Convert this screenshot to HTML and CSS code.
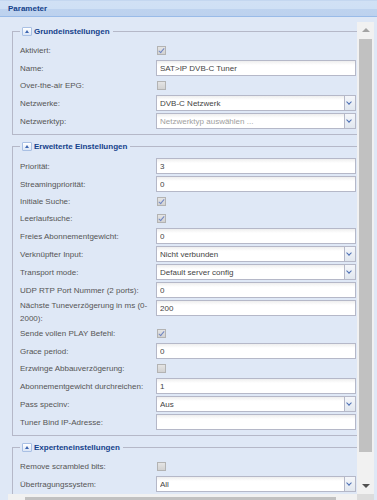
FILE: index.html
```html
<!DOCTYPE html>
<html lang="de">
<head>
  <meta charset="UTF-8" />
  <title>Parameter</title>
  <link rel="stylesheet" href="styles.css">
</head>
<body>
<div class="panel">
  <div class="panel-header">Parameter</div>
  <div class="panel-body">
    <div class="scroller">
      <div class="scroll-view">
        <form class="form">

          <fieldset>
            <legend><span class="tool"></span>Grundeinstellungen</legend>
            <div class="row check"><label>Aktiviert:</label><span class="cb on"></span></div>
            <div class="row"><label>Name:</label><input class="field" type="text" value="SAT>IP DVB-C Tuner"></div>
            <div class="row check"><label>Over-the-air EPG:</label><span class="cb"></span></div>
            <div class="row"><label>Netzwerke:</label><div class="combo"><input class="field" type="text" value="DVB-C Netzwerk"><span class="trigger"></span></div></div>
            <div class="row"><label>Netzwerktyp:</label><div class="combo"><input class="field" type="text" placeholder="Netzwerktyp auswählen ..."><span class="trigger"></span></div></div>
          </fieldset>

          <fieldset>
            <legend><span class="tool"></span>Erweiterte Einstellungen</legend>
            <div class="row"><label>Priorität:</label><input class="field" type="text" value="3"></div>
            <div class="row"><label>Streamingpriorität:</label><input class="field" type="text" value="0"></div>
            <div class="row check"><label>Initiale Suche:</label><span class="cb on"></span></div>
            <div class="row check"><label>Leerlaufsuche:</label><span class="cb on"></span></div>
            <div class="row"><label>Freies Abonnementgewicht:</label><input class="field" type="text" value="0"></div>
            <div class="row"><label>Verknüpfter Input:</label><div class="combo"><input class="field" type="text" value="Nicht verbunden"><span class="trigger"></span></div></div>
            <div class="row"><label>Transport mode:</label><div class="combo"><input class="field" type="text" value="Default server config"><span class="trigger"></span></div></div>
            <div class="row"><label>UDP RTP Port Nummer (2 ports):</label><input class="field" type="text" value="0"></div>
            <div class="row tall"><label>Nächste Tuneverzögerung in ms (0-2000):</label><input class="field" type="text" value="200"></div>
            <div class="row check"><label>Sende vollen PLAY Befehl:</label><span class="cb on"></span></div>
            <div class="row"><label>Grace period:</label><input class="field" type="text" value="0"></div>
            <div class="row check"><label>Erzwinge Abbauverzögerung:</label><span class="cb"></span></div>
            <div class="row"><label>Abonnementgewicht durchreichen:</label><input class="field" type="text" value="1"></div>
            <div class="row"><label>Pass specinv:</label><div class="combo"><input class="field" type="text" value="Aus"><span class="trigger"></span></div></div>
            <div class="row"><label>Tuner Bind IP-Adresse:</label><input class="field" type="text" value=""></div>
          </fieldset>

          <fieldset>
            <legend><span class="tool"></span>Experteneinstellungen</legend>
            <div class="row check"><label>Remove scrambled bits:</label><span class="cb"></span></div>
            <div class="row"><label>Übertragungssystem:</label><div class="combo"><input class="field" type="text" value="All"><span class="trigger"></span></div></div>
          </fieldset>

        </form>
      </div>
      <div class="vbar">
        <div class="sb-btn up"></div>
        <div class="sb-thumb"></div>
        <div class="sb-space"></div>
        <div class="sb-btn down"></div>
      </div>
    </div>
    <div class="hbar">
      <div class="sb-btn left"></div>
      <div class="sb-thumb-h"></div>
      <div class="sb-space"></div>
      <div class="sb-btn right"></div>
      <div class="sb-corner"></div>
    </div>
  </div>
</div>
</body>
</html>
```

FILE: styles.css
```css
* {
  margin: 0;
  padding: 0;
  box-sizing: border-box;
}

html, body {
  width: 377px;
  height: 500px;
  overflow: hidden;
}

body {
  font-family: 'Liberation Sans', Arial, sans-serif;
  font-size: 8px;
  color: #333;
  background: #dfe8f6;
}

.panel {
  height: 500px;
  display: flex;
  flex-direction: column;
}

.panel-header {
  height: 17px;
  padding: 0 0 0 8px;
  border-top: 1px solid #c4d7f0;
  border-bottom: 1px solid #99bbe8;
  background: linear-gradient(#d1e1f5 0, #cfe0f5 50%, #bed3ef 55%, #bcd1ee 100%);
  color: #15428b;
  font-weight: bold;
  line-height: 15px;
}

.panel-body {
  flex: 1;
  padding: 5px 3px 0 8px;
  display: flex;
  flex-direction: column;
  overflow: hidden;
}

.scroller {
  display: flex;
  height: 472px;
}

.scroll-view {
  width: 349px;
  overflow: hidden;
}

.form {
  width: 362px;
  padding: 4px 0 0 4px;
}

/* fieldsets */
fieldset {
  border: 1px solid #b5b8c8;
  padding: 6px 7px 3px 7px;
  margin-bottom: 6px;
}

legend {
  padding: 0 3px 0 2px;
  color: #15428b;
  font-weight: bold;
  line-height: 11px;
  display: flex;
  align-items: center;
}

.tool {
  display: inline-block;
  width: 10px;
  height: 9px;
  margin-right: 2px;
  border: 1px solid #a9c0e4;
  border-radius: 1px;
  background: linear-gradient(#ffffff, #dbe6f6);
  position: relative;
}

.tool::after {
  content: "";
  position: absolute;
  left: 2px;
  top: 2px;
  border-left: 2px solid transparent;
  border-right: 2px solid transparent;
  border-bottom: 3px solid #3f67b1;
}

/* rows */
.row {
  display: flex;
  align-items: center;
  height: 16px;
  margin-bottom: 2px;
}

.row.check {
  height: 15px;
}

.row.tall {
  height: 24px;
  align-items: flex-start;
}

.row.tall label {
  margin-top: -1px;
}

.row label {
  width: 136px;
  padding-right: 8px;
  line-height: 13px;
  color: #555;
}

.field {
  width: 200px;
  height: 16px;
  border: 1px solid #b5b8c8;
  background: linear-gradient(#eeeeee 0, #ffffff 4px);
  font-family: 'Liberation Sans', Arial, sans-serif;
  font-size: 8px;
  color: #444;
  padding: 0 3px;
  outline: none;
}

.field::placeholder {
  color: #a0a0a0;
}

.combo {
  display: flex;
  width: 200px;
}

.combo .field {
  width: 189px;
}

.trigger {
  width: 11px;
  height: 16px;
  border: 1px solid #b5b8c8;
  border-left: none;
  background: linear-gradient(#f4f6fa, #e1e7ef);
  position: relative;
}

.trigger::after {
  content: "";
  position: absolute;
  left: 2px;
  top: 4px;
  width: 3px;
  height: 3px;
  border-right: 1.5px solid #4c6fb4;
  border-bottom: 1.5px solid #4c6fb4;
  transform: rotate(45deg);
}

.cb {
  width: 9px;
  height: 9px;
  margin-left: 1px;
  border: 1px solid #b3b3b3;
  background: linear-gradient(#e4e4e4, #d2d2d2);
  position: relative;
}

.cb.on::after {
  content: "";
  position: absolute;
  left: 2px;
  top: 0;
  width: 2px;
  height: 5px;
  border-right: 1.5px solid #7086c4;
  border-bottom: 1.5px solid #7086c4;
  transform: rotate(40deg);
}

/* scrollbars */
.vbar {
  width: 17px;
  display: flex;
  flex-direction: column;
  background: #f1f1f1;
}

.sb-btn {
  width: 17px;
  height: 17px;
  flex: none;
  position: relative;
}

.sb-btn::after {
  content: "";
  position: absolute;
  left: 5px;
  border-left: 4px solid transparent;
  border-right: 4px solid transparent;
}

.sb-btn.up::after {
  top: 6px;
  border-bottom: 4px solid #a3a3a3;
}

.sb-btn.down::after {
  top: 7px;
  border-top: 4px solid #505050;
}

.sb-thumb {
  height: 413px;
  margin: 0 2px;
  background: #c1c1c1;
}

.sb-space {
  flex: 1;
}

.hbar {
  height: 17px;
  display: flex;
  background: #f1f1f1;
}

.sb-thumb-h {
  width: 311px;
  height: 13px;
  margin-top: 3px;
  background: #c1c1c1;
}

.sb-btn.left, .sb-btn.right {
  background: #f1f1f1;
}

.sb-corner {
  width: 17px;
  background: #dcdcdc;
}
```
